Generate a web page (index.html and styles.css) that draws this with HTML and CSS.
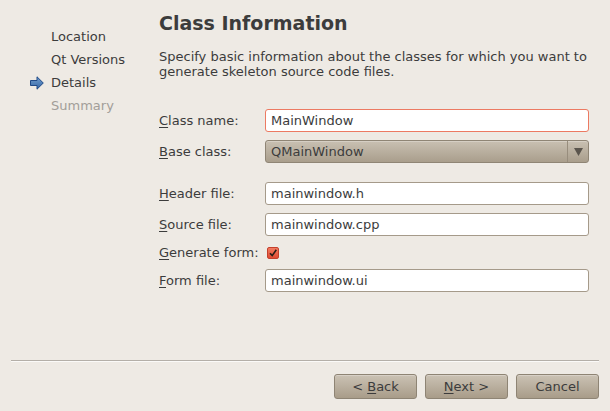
FILE: index.html
```html
<!DOCTYPE html>
<html>
<head>
<meta charset="utf-8">
<link rel="stylesheet" href="styles.css">
</head>
<body>
<div class="window">
  <div class="body">
    <ul class="steps">
      <li class="step"><span class="step-icon"></span>Location</li>
      <li class="step"><span class="step-icon"></span>Qt Versions</li>
      <li class="step current"><span class="step-icon"><svg width="14" height="14" viewBox="0 0 14 14"><defs><linearGradient id="ag" x1="0" y1="0" x2="0" y2="1"><stop offset="0" stop-color="#729fcf"/><stop offset="1" stop-color="#3465a4"/></linearGradient></defs><path d="M0.5 4.5 H7 V0.8 L13.3 7 L7 13.2 V9.5 H0.5 Z" fill="url(#ag)" stroke="#204a87" stroke-width="1" stroke-linejoin="miter"/></svg></span>Details</li>
      <li class="step disabled"><span class="step-icon"></span>Summary</li>
    </ul>
    <div class="main">
      <h1 class="title">Class Information</h1>
      <p class="desc">Specify basic information about the classes for which you want to generate skeleton source code files.</p>
      <div class="form">
        <label class="label"><u>C</u>lass name:</label>
        <div class="field focused">MainWindow</div>
        <label class="label"><u>B</u>ase class:</label>
        <div class="combo"><span class="combo-text">QMainWindow</span><span class="combo-btn"><svg width="9" height="8" viewBox="0 0 9 8"><path d="M0 0 H9 L4.5 8 Z" fill="#5b554d"/></svg></span></div>
        <div class="spacer"></div>
        <label class="label"><u>H</u>eader file:</label>
        <div class="field">mainwindow.h</div>
        <label class="label"><u>S</u>ource file:</label>
        <div class="field">mainwindow.cpp</div>
        <label class="label"><u>G</u>enerate form:</label>
        <div class="check-cell"><span class="checkbox"><svg width="10" height="10" viewBox="0 0 10 10"><path d="M2 5.2 L4.2 7.6 L8.3 1.8" fill="none" stroke="#2a1d18" stroke-width="1.6"/></svg></span></div>
        <label class="label"><u>F</u>orm file:</label>
        <div class="field">mainwindow.ui</div>
      </div>
    </div>
  </div>
  <div class="footer">
    <div class="separator"></div>
    <div class="buttons">
      <button class="btn">&lt; <u>B</u>ack</button>
      <button class="btn"><u>N</u>ext &gt;</button>
      <button class="btn">Cancel</button>
    </div>
  </div>
</div>
</body>
</html>
```
FILE: styles.css
```css
html, body {
  margin: 0;
  padding: 0;
}
body {
  background: #eeeae4;
  font-family: "DejaVu Sans", sans-serif;
  font-size: 13px;
  color: #3c3c3c;
}
.window {
  width: 610px;
  height: 411px;
  display: flex;
  flex-direction: column;
}
.body {
  flex: 1;
  display: flex;
}
.steps {
  list-style: none;
  margin: 0;
  padding: 25px 0 0 30px;
  width: 129px;
}
.step {
  display: flex;
  align-items: center;
  height: 23px;
  line-height: 23px;
}
.step-icon {
  width: 21px;
  height: 14px;
  display: flex;
}
.step.disabled {
  color: #a29e99;
}
.main {
  width: 430px;
  padding-top: 11px;
}
.title {
  margin: 0;
  font-size: 19px;
  line-height: 24px;
  font-weight: bold;
  color: #3c3c3c;
}
.desc {
  margin: 14px 0 0;
  line-height: 15px;
}
.form {
  margin-top: 30px;
  display: grid;
  grid-template-columns: 106px 324px;
  row-gap: 8px;
  align-items: center;
}
.label u, .btn u {
  text-decoration-thickness: 1px;
  text-underline-offset: 2px;
}
.field {
  box-sizing: border-box;
  height: 23px;
  border: 1px solid #a59a8a;
  border-radius: 3px;
  background: #fff;
  padding: 0 5px;
  line-height: 21px;
  color: #3c3c3c;
}
.field.focused {
  border-color: #ec7a62;
}
.combo {
  box-sizing: border-box;
  height: 23px;
  border: 1px solid #8f8575;
  border-radius: 3px;
  background: linear-gradient(#c9c0b2, #a99e8c);
  display: flex;
  align-items: center;
  box-shadow: inset 0 1px 0 rgba(255,255,255,0.25);
}
.combo-text {
  flex: 1;
  padding-left: 5px;
}
.combo-btn {
  width: 20px;
  height: 100%;
  border-left: 1px solid #988d7d;
  display: flex;
  align-items: center;
  justify-content: center;
}
.spacer {
  grid-column: 1 / 3;
  height: 3px;
}
.check-cell {
  height: 17px;
  display: flex;
  align-items: center;
  padding-left: 2px;
}
.checkbox {
  box-sizing: border-box;
  width: 12px;
  height: 12px;
  border: 1px solid #c4402c;
  border-radius: 2px;
  background: linear-gradient(#f27a60, #df4b33);
  display: flex;
  align-items: center;
  justify-content: center;
}
.footer {
  padding: 0 11px 12px;
}
.separator {
  height: 1px;
  background: #b4afa8;
  border-bottom: 1px solid #fbfaf8;
}
.buttons {
  margin-top: 12px;
  display: flex;
  justify-content: flex-end;
  gap: 8px;
}
.btn {
  box-sizing: border-box;
  width: 83px;
  height: 25px;
  border: 1px solid #8e8474;
  border-radius: 3px;
  background: linear-gradient(#cbc2b4, #a89c89);
  font-family: "DejaVu Sans", sans-serif;
  font-size: 13px;
  color: #3c3c3c;
  padding: 0;
  box-shadow: inset 0 1px 0 rgba(255,255,255,0.25);
}
```
